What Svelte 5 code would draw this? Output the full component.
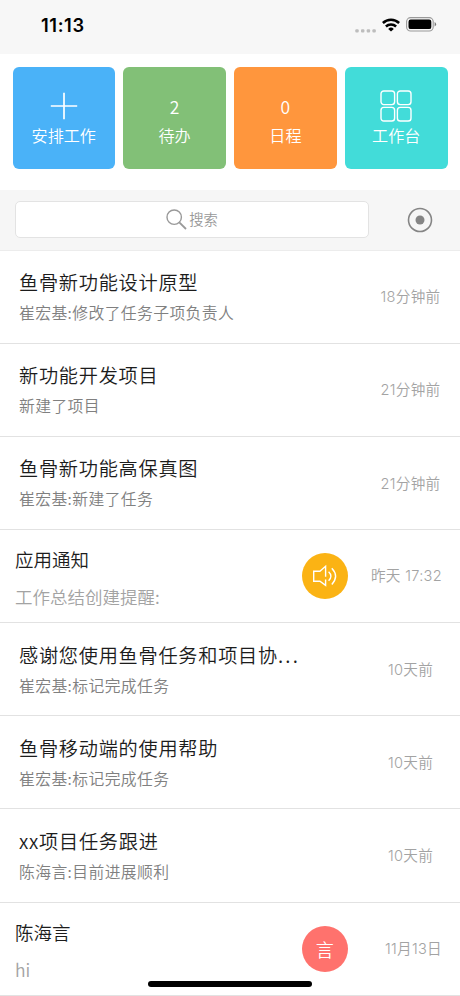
<script>
  const tiles = [
    { label: '安排工作', color: 'blue', icon: 'plus' },
    { label: '待办', color: 'green', count: 2 },
    { label: '日程', color: 'orange', count: 0 },
    { label: '工作台', color: 'teal', icon: 'grid' }
  ];

  const items = [
    { title: '鱼骨新功能设计原型', text: '崔宏基:修改了任务子项负责人', time: '18分钟前' },
    { title: '新功能开发项目', text: '新建了项目', time: '21分钟前' },
    { title: '鱼骨新功能高保真图', text: '崔宏基:新建了任务', time: '21分钟前' },
    { title: '应用通知', text: '工作总结创建提醒:', time: '昨天 17:32', avatar: 'sound' },
    { title: '感谢您使用鱼骨任务和项目协', cut: true, text: '崔宏基:标记完成任务', time: '10天前' },
    { title: '鱼骨移动端的使用帮助', text: '崔宏基:标记完成任务', time: '10天前' },
    { title: 'xx项目任务跟进', text: '陈海言:目前进展顺利', time: '10天前' },
    { title: '陈海言', text: 'hi', time: '11月13日', avatar: '言' }
  ];
</script>

<div class="screen">
  <header class="status">
    <span class="clock">11:13</span>
    <div class="signals">
      <svg width="22" height="4" viewBox="0 0 22 4" fill="#bdbdbd">
        <rect x="0.3" y="0.2" width="3.4" height="3.4" rx="1" />
        <rect x="6" y="0.2" width="3.4" height="3.4" rx="1" />
        <rect x="11.7" y="0.2" width="3.4" height="3.4" rx="1" />
        <rect x="17.4" y="0.2" width="3.4" height="3.4" rx="1" />
      </svg>
      <svg class="wifi" width="18" height="14" viewBox="0 0 18 14" fill="none" stroke="#000" stroke-width="2.5">
        <path d="M0.9 5a11.6 11.6 0 0 1 16.2 0" />
        <path d="M3.9 8.5a7.3 7.3 0 0 1 10.2 0" />
        <path d="M9 13.6 6.2 10.9a4 4 0 0 1 5.6 0z" fill="#000" stroke="none" />
      </svg>
      <svg class="battery" width="31" height="15" viewBox="0 0 31 15">
        <rect x="0.6" y="0.6" width="26.6" height="13.4" rx="4" fill="none" stroke="#9a9a9a" stroke-width="1.1" />
        <rect x="2.5" y="2.5" width="22.8" height="9.6" rx="2.2" />
        <path d="M28.6 5v4.6q1.5-.8 1.5-2.3T28.6 5z" fill="#777" />
      </svg>
    </div>
  </header>

  <nav class="tiles">
    {#each tiles as tile}
      <button class="tile {tile.color}">
        <span class="tile-top">
          {#if tile.icon === 'plus'}
            <svg width="28" height="28" viewBox="0 0 28 28" fill="none" stroke="#fff" stroke-width="1.7">
              <path d="M14 .8v26.4M.8 14h26.4" />
            </svg>
          {:else if tile.icon === 'grid'}
            <svg width="32" height="32" viewBox="0 0 32 32" fill="none" stroke="#fff" stroke-width="1.4">
              <rect x="1" y="1" width="13.6" height="13.6" rx="2.8" />
              <rect x="17.4" y="1" width="13.6" height="13.6" rx="2.8" />
              <rect x="1" y="17.4" width="13.6" height="13.6" rx="2.8" />
              <rect x="17.4" y="17.4" width="13.6" height="13.6" rx="2.8" />
            </svg>
          {:else}
            {tile.count}
          {/if}
        </span>
        <span class="tile-label">{tile.label}</span>
      </button>
    {/each}
  </nav>

  <div class="search-bar">
    <div class="search">
      <svg width="21" height="21" viewBox="0 0 21 21" fill="none" stroke="#999" stroke-width="1.4">
        <circle cx="8.2" cy="8.2" r="7.2" />
        <path d="M13.3 13.3 20 20" stroke-width="1.8" />
      </svg>
      <span>搜索</span>
    </div>
    <svg width="26" height="26" viewBox="0 0 26 26">
      <circle cx="13" cy="13" r="11.5" fill="none" stroke="#858585" stroke-width="1.6" />
      <circle cx="13" cy="13" r="4.5" fill="#858585" />
    </svg>
  </div>

  <ul class="list">
    {#each items as item}
      <li class="item" class:notice={item.avatar}>
        <div class="body">
          <div class="title">{item.title}{#if item.cut}<span class="dots">...</span>{/if}</div>
          <div class="text">{item.text}</div>
        </div>
        {#if item.avatar === 'sound'}
          <span class="avatar yellow">
            <svg width="26" height="24" viewBox="0 0 26 24" fill="none" stroke="#fff" stroke-width="1.4">
              <path d="M13.6 15.5V21.3L7.9 17.3H1.7V7.2H7.9L13.6 2.3v10.4" />
              <path d="M16.6 7.8q4.6 4.2 0 9" />
              <path d="M19.8 4.2q7.6 8 0 16.200" />
            </svg>
          </span>
        {:else if item.avatar}
          <span class="avatar red">{item.avatar}</span>
        {/if}
        <span class="time">{item.time}</span>
      </li>
    {/each}
  </ul>

  <div class="home-indicator"></div>
</div>

<style>
  :global(body) {
    background: #fff;
  }

  .screen {
    position: relative;
    width: 460px;
    height: 996px;
    overflow: hidden;
    font-family: "Noto Sans CJK SC", sans-serif;
    font-weight: 350;
    background: #fff;
  }

  svg {
    display: block;
    flex: none;
  }

  .status {
    display: flex;
    justify-content: space-between;
    box-sizing: border-box;
    height: 54px;
    padding: 14px 23px 0 41px;
    background: #f7f7f7;
  }

  .clock {
    font: 600 18.3px/22px Inter, sans-serif;
    letter-spacing: 0.6px;
  }

  .signals {
    display: flex;
    align-items: flex-end;
    height: 18px;
  }

  .signals svg:first-child {
    margin-bottom: -1px;
  }

  .wifi {
    margin: 0 6px 0 5px;
  }

  .tiles {
    display: flex;
    gap: 8.3px;
    box-sizing: border-box;
    height: 135.5px;
    padding: 12.5px 12.5px 20.5px;
  }

  .tile {
    display: flex;
    flex: 1;
    flex-direction: column;
    align-items: center;
    padding: 22px 0 0;
    border: 0;
    border-radius: 6px;
    color: #fff;
    font-family: inherit;
    font-weight: inherit;
  }

  .blue { background: #4ab2f8; }
  .green { background: #82c077; }
  .orange { background: #ff963d; }
  .teal { background: #42dcd9; }

  .tile-top {
    display: flex;
    align-items: center;
    justify-content: center;
    height: 35px;
    font-size: 17.5px;
    line-height: 35px;
  }

  .tile-label {
    font-size: 16.1px;
    line-height: 22px;
  }

  .search-bar {
    display: flex;
    align-items: center;
    justify-content: space-between;
    box-sizing: border-box;
    height: 61px;
    padding: 0 27px 0 15px;
    border-bottom: 1px solid #ececec;
    background: #f6f6f6;
  }

  .search {
    display: flex;
    align-items: center;
    justify-content: center;
    gap: 2px;
    box-sizing: border-box;
    width: 354px;
    height: 37px;
    border: 1px solid #e3e3e3;
    border-radius: 5px;
    background: #fff;
    color: #999;
    font-size: 14.3px;
    line-height: 20px;
  }

  .search span {
    margin-bottom: 1px;
  }

  .list {
    margin: 0;
    padding: 0;
    list-style: none;
  }

  .item {
    display: flex;
    box-sizing: border-box;
    height: 93.17px;
    padding-left: 19px;
    border-bottom: 1px solid #e2e2e2;
  }

  .body {
    flex: 1;
    white-space: nowrap;
  }

  .title {
    margin-top: 16.4px;
    color: #1c1c1c;
    font-size: 19.2px;
    line-height: 30px;
    letter-spacing: 0.73px;
  }

  .dots {
    letter-spacing: 2.2px;
  }

  .text {
    margin-top: 4.2px;
    color: #808080;
    font-size: 15.8px;
    line-height: 24px;
    letter-spacing: 0.4px;
  }

  .time {
    width: 99px;
    margin-top: 35.8px;
    color: #a3a3a3;
    font-family: Inter, "Noto Sans CJK SC", sans-serif;
    font-size: 14.6px;
    line-height: 22px;
    letter-spacing: 0.3px;
    text-align: center;
  }

  .notice {
    padding-left: 15px;
  }

  .notice .title {
    margin-top: 14.5px;
    font-size: 18.5px;
    letter-spacing: 0;
  }

  .notice .text {
    margin-top: 10.5px;
    color: #a3a3a3;
    font-size: 17.5px;
    letter-spacing: 0;
  }

  .notice .time {
    width: 75px;
    margin-right: 18px;
    margin-left: 19px;
    margin-top: 35px;
    text-align: right;
    white-space: nowrap;
  }

  .avatar {
    display: flex;
    align-items: center;
    justify-content: center;
    width: 46.5px;
    height: 46.5px;
    margin-top: 23px;
    border-radius: 50%;
    color: #fff;
    font-size: 18px;
  }

  .yellow { background: #fbb314; }
  .red { background: #ff726d; }

  .home-indicator {
    position: absolute;
    bottom: 9px;
    left: 148px;
    width: 164px;
    height: 6px;
    border-radius: 3px;
    background: #000;
  }
</style>
